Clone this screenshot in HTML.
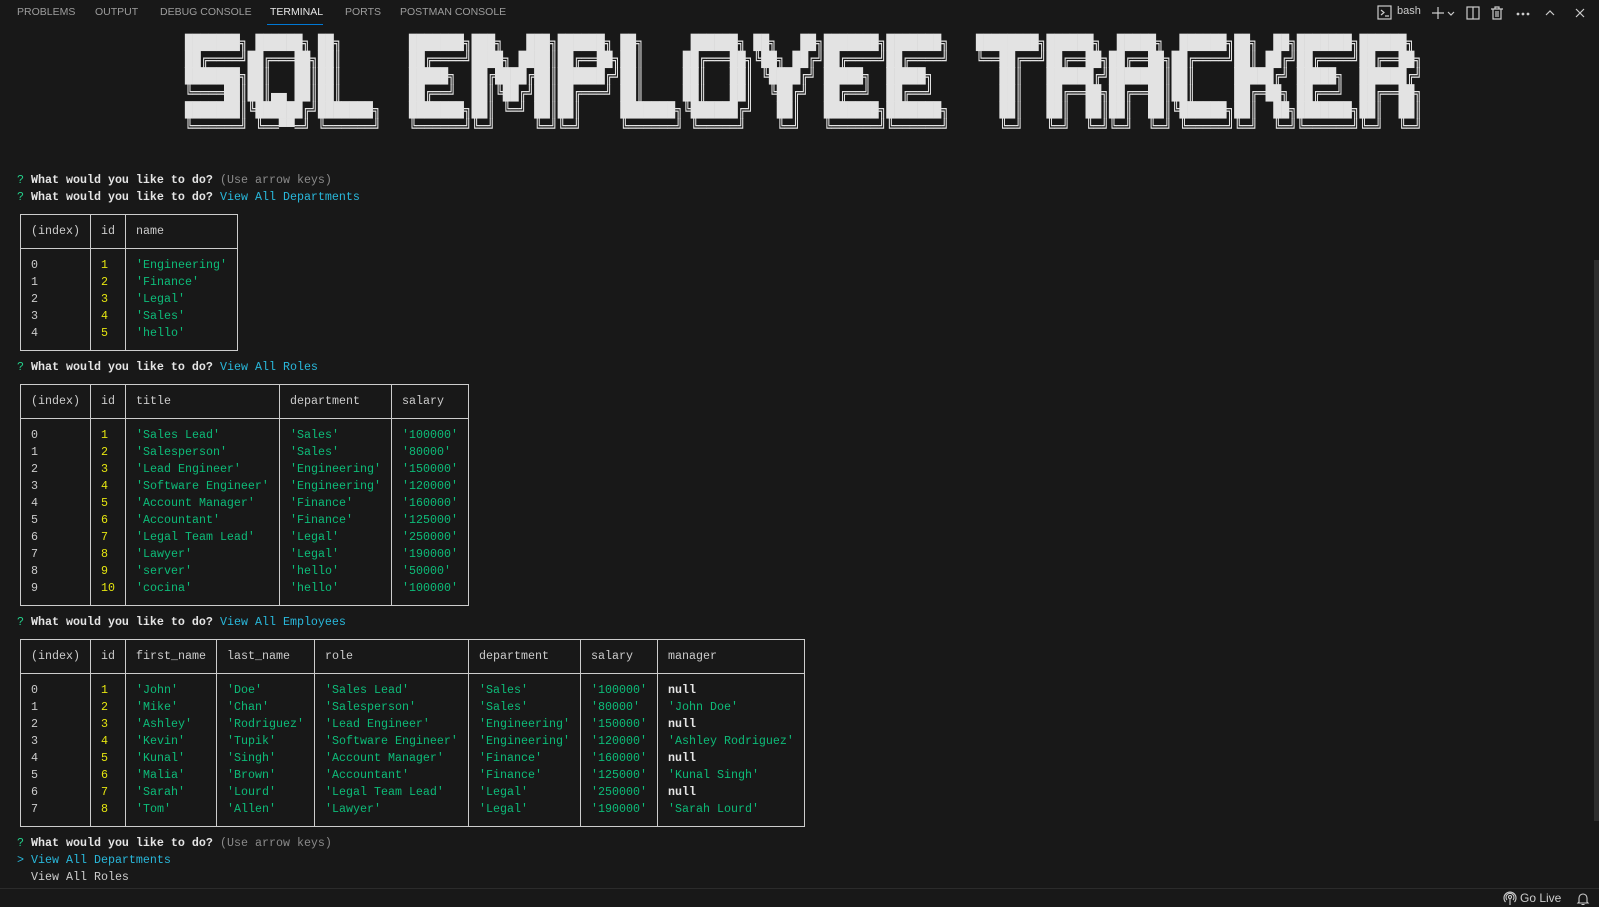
<!DOCTYPE html>
<html><head><meta charset="utf-8"><style>
html,body{margin:0;padding:0;background:#181818;width:1599px;height:907px;overflow:hidden;position:relative;font-family:"Liberation Mono","DejaVu Sans Mono",monospace;}
.tab{position:absolute;top:6px;font:10.5px "Liberation Sans",sans-serif;color:#9d9d9d;letter-spacing:0}
.title{position:absolute;top:35px;margin:0;font-family:"DejaVu Sans Mono",monospace;font-size:13px;line-height:15.1px;color:#e3e3e3;white-space:pre;transform-origin:0 0;transform:scaleY(1.126)}
.l{position:absolute;left:0;height:17px;line-height:17px;font-size:11.67px;white-space:pre;color:#cccccc}
.l span{position:absolute;top:0}
.q{color:#23d18b}.b{font-weight:bold;color:#e5e5e5}.g{color:#8a8a8a}.c{color:#29b8db}
.y{color:#e5e510}.s{color:#0dbc79}
.h{position:absolute;height:1px;background:#cccccc}
.v{position:absolute;width:1px;background:#cccccc}
</style></head><body>
<div class="tab" style="left:17px">PROBLEMS</div>
<div class="tab" style="left:95px">OUTPUT</div>
<div class="tab" style="left:160px">DEBUG CONSOLE</div>
<div class="tab" style="left:270px;color:#e7e7e7">TERMINAL</div>
<div style="position:absolute;left:267px;top:24px;width:56px;height:1px;background:#0078d4"></div>
<div class="tab" style="left:345px">PORTS</div>
<div class="tab" style="left:400px">POSTMAN CONSOLE</div>

<svg style="position:absolute;left:1376px;top:4px" width="225" height="18" viewBox="0 0 225 18" fill="none" stroke="#cccccc" stroke-width="1.2">
<rect x="2" y="2" width="13" height="13"/><path d="M5 6l3 2.5-3 2.5M9 12h4"/>
<path d="M62 3v12M56 9h12"/><path d="M72 8l3 3 3-3"/>
<rect x="91" y="3" width="12" height="12"/><path d="M97 3v12"/>
<path d="M115 5h12M119 5V3h4v2M117 5v10h8V5M120 7v6M122 7v6"/>
<circle cx="142" cy="10" r=".8" fill="#ccc"/><circle cx="147" cy="10" r=".8" fill="#ccc"/><circle cx="152" cy="10" r=".8" fill="#ccc"/>
<path d="M170 11l4-4 4 4"/><path d="M200 5l8 8M208 5l-8 8"/>
</svg>
<div style="position:absolute;left:1397px;top:5px;font:11px 'Liberation Sans',sans-serif;color:#cccccc">bash</div>

<pre class="title" style="left:185px">███████╗ ██████╗ ██╗     
██╔════╝██╔═══██╗██║     
███████╗██║   ██║██║     
╚════██║██║▄▄ ██║██║     
███████║╚██████╔╝███████╗
╚══════╝ ╚══▀▀═╝ ╚══════╝</pre>
<pre class="title" style="left:409px">███████╗███╗   ███╗██████╗ ██╗      ██████╗ ██╗   ██╗███████╗███████╗
██╔════╝████╗ ████║██╔══██╗██║     ██╔═══██╗╚██╗ ██╔╝██╔════╝██╔════╝
█████╗  ██╔████╔██║██████╔╝██║     ██║   ██║ ╚████╔╝ █████╗  █████╗  
██╔══╝  ██║╚██╔╝██║██╔═══╝ ██║     ██║   ██║  ╚██╔╝  ██╔══╝  ██╔══╝  
███████╗██║ ╚═╝ ██║██║     ███████╗╚██████╔╝   ██║   ███████╗███████╗
╚══════╝╚═╝     ╚═╝╚═╝     ╚══════╝ ╚═════╝    ╚═╝   ╚══════╝╚══════╝</pre>
<pre class="title" style="left:976px">████████╗██████╗  █████╗  ██████╗██╗  ██╗███████╗██████╗ 
╚══██╔══╝██╔══██╗██╔══██╗██╔════╝██║ ██╔╝██╔════╝██╔══██╗
   ██║   ██████╔╝███████║██║     █████╔╝ █████╗  ██████╔╝
   ██║   ██╔══██╗██╔══██║██║     ██╔═██╗ ██╔══╝  ██╔══██╗
   ██║   ██║  ██║██║  ██║╚██████╗██║  ██╗███████╗██║  ██║
   ╚═╝   ╚═╝  ╚═╝╚═╝  ╚═╝ ╚═════╝╚═╝  ╚═╝╚══════╝╚═╝  ╚═╝</pre>

<div class="l" style="top:171.5px"><span class="q" style="left:17px">?</span><span class="b" style="left:31px">What would you like to do?</span><span class="g" style="left:220px">(Use arrow keys)</span></div>
<div class="l" style="top:188.5px"><span class="q" style="left:17px">?</span><span class="b" style="left:31px">What would you like to do?</span><span class="c" style="left:220px">View All Departments</span></div>

<div class="l" style="top:222.5px"><span style="left:31px">(index)</span><span style="left:101px">id</span><span style="left:136px">name</span></div>
<div class="l" style="top:256.5px"><span style="left:31px">0</span><span class="y" style="left:101px">1</span><span class="s" style="left:136px">'Engineering'</span></div>
<div class="l" style="top:273.5px"><span style="left:31px">1</span><span class="y" style="left:101px">2</span><span class="s" style="left:136px">'Finance'</span></div>
<div class="l" style="top:290.5px"><span style="left:31px">2</span><span class="y" style="left:101px">3</span><span class="s" style="left:136px">'Legal'</span></div>
<div class="l" style="top:307.5px"><span style="left:31px">3</span><span class="y" style="left:101px">4</span><span class="s" style="left:136px">'Sales'</span></div>
<div class="l" style="top:324.5px"><span style="left:31px">4</span><span class="y" style="left:101px">5</span><span class="s" style="left:136px">'hello'</span></div>
<div class="h" style="left:20px;top:214px;width:218px"></div>
<div class="h" style="left:20px;top:248px;width:218px"></div>
<div class="h" style="left:20px;top:350px;width:218px"></div>
<div class="v" style="left:20px;top:214px;height:137px"></div>
<div class="v" style="left:90px;top:214px;height:137px"></div>
<div class="v" style="left:125px;top:214px;height:137px"></div>
<div class="v" style="left:237px;top:214px;height:137px"></div>

<div class="l" style="top:358.5px"><span class="q" style="left:17px">?</span><span class="b" style="left:31px">What would you like to do?</span><span class="c" style="left:220px">View All Roles</span></div>

<div class="l" style="top:392.5px"><span style="left:31px">(index)</span><span style="left:101px">id</span><span style="left:136px">title</span><span style="left:290px">department</span><span style="left:402px">salary</span></div>
<div class="l" style="top:426.5px"><span style="left:31px">0</span><span class="y" style="left:101px">1</span><span class="s" style="left:136px">'Sales Lead'</span><span class="s" style="left:290px">'Sales'</span><span class="s" style="left:402px">'100000'</span></div>
<div class="l" style="top:443.5px"><span style="left:31px">1</span><span class="y" style="left:101px">2</span><span class="s" style="left:136px">'Salesperson'</span><span class="s" style="left:290px">'Sales'</span><span class="s" style="left:402px">'80000'</span></div>
<div class="l" style="top:460.5px"><span style="left:31px">2</span><span class="y" style="left:101px">3</span><span class="s" style="left:136px">'Lead Engineer'</span><span class="s" style="left:290px">'Engineering'</span><span class="s" style="left:402px">'150000'</span></div>
<div class="l" style="top:477.5px"><span style="left:31px">3</span><span class="y" style="left:101px">4</span><span class="s" style="left:136px">'Software Engineer'</span><span class="s" style="left:290px">'Engineering'</span><span class="s" style="left:402px">'120000'</span></div>
<div class="l" style="top:494.5px"><span style="left:31px">4</span><span class="y" style="left:101px">5</span><span class="s" style="left:136px">'Account Manager'</span><span class="s" style="left:290px">'Finance'</span><span class="s" style="left:402px">'160000'</span></div>
<div class="l" style="top:511.5px"><span style="left:31px">5</span><span class="y" style="left:101px">6</span><span class="s" style="left:136px">'Accountant'</span><span class="s" style="left:290px">'Finance'</span><span class="s" style="left:402px">'125000'</span></div>
<div class="l" style="top:528.5px"><span style="left:31px">6</span><span class="y" style="left:101px">7</span><span class="s" style="left:136px">'Legal Team Lead'</span><span class="s" style="left:290px">'Legal'</span><span class="s" style="left:402px">'250000'</span></div>
<div class="l" style="top:545.5px"><span style="left:31px">7</span><span class="y" style="left:101px">8</span><span class="s" style="left:136px">'Lawyer'</span><span class="s" style="left:290px">'Legal'</span><span class="s" style="left:402px">'190000'</span></div>
<div class="l" style="top:562.5px"><span style="left:31px">8</span><span class="y" style="left:101px">9</span><span class="s" style="left:136px">'server'</span><span class="s" style="left:290px">'hello'</span><span class="s" style="left:402px">'50000'</span></div>
<div class="l" style="top:579.5px"><span style="left:31px">9</span><span class="y" style="left:101px">10</span><span class="s" style="left:136px">'cocina'</span><span class="s" style="left:290px">'hello'</span><span class="s" style="left:402px">'100000'</span></div>
<div class="h" style="left:20px;top:384px;width:449px"></div>
<div class="h" style="left:20px;top:418px;width:449px"></div>
<div class="h" style="left:20px;top:605px;width:449px"></div>
<div class="v" style="left:20px;top:384px;height:222px"></div>
<div class="v" style="left:90px;top:384px;height:222px"></div>
<div class="v" style="left:125px;top:384px;height:222px"></div>
<div class="v" style="left:279px;top:384px;height:222px"></div>
<div class="v" style="left:391px;top:384px;height:222px"></div>
<div class="v" style="left:468px;top:384px;height:222px"></div>

<div class="l" style="top:613.5px"><span class="q" style="left:17px">?</span><span class="b" style="left:31px">What would you like to do?</span><span class="c" style="left:220px">View All Employees</span></div>

<div class="l" style="top:647.5px"><span style="left:31px">(index)</span><span style="left:101px">id</span><span style="left:136px">first_name</span><span style="left:227px">last_name</span><span style="left:325px">role</span><span style="left:479px">department</span><span style="left:591px">salary</span><span style="left:668px">manager</span></div>
<div class="l" style="top:681.5px"><span style="left:31px">0</span><span class="y" style="left:101px">1</span><span class="s" style="left:136px">'John'</span><span class="s" style="left:227px">'Doe'</span><span class="s" style="left:325px">'Sales Lead'</span><span class="s" style="left:479px">'Sales'</span><span class="s" style="left:591px">'100000'</span><span class="b" style="left:668px">null</span></div>
<div class="l" style="top:698.5px"><span style="left:31px">1</span><span class="y" style="left:101px">2</span><span class="s" style="left:136px">'Mike'</span><span class="s" style="left:227px">'Chan'</span><span class="s" style="left:325px">'Salesperson'</span><span class="s" style="left:479px">'Sales'</span><span class="s" style="left:591px">'80000'</span><span class="s" style="left:668px">'John Doe'</span></div>
<div class="l" style="top:715.5px"><span style="left:31px">2</span><span class="y" style="left:101px">3</span><span class="s" style="left:136px">'Ashley'</span><span class="s" style="left:227px">'Rodriguez'</span><span class="s" style="left:325px">'Lead Engineer'</span><span class="s" style="left:479px">'Engineering'</span><span class="s" style="left:591px">'150000'</span><span class="b" style="left:668px">null</span></div>
<div class="l" style="top:732.5px"><span style="left:31px">3</span><span class="y" style="left:101px">4</span><span class="s" style="left:136px">'Kevin'</span><span class="s" style="left:227px">'Tupik'</span><span class="s" style="left:325px">'Software Engineer'</span><span class="s" style="left:479px">'Engineering'</span><span class="s" style="left:591px">'120000'</span><span class="s" style="left:668px">'Ashley Rodriguez'</span></div>
<div class="l" style="top:749.5px"><span style="left:31px">4</span><span class="y" style="left:101px">5</span><span class="s" style="left:136px">'Kunal'</span><span class="s" style="left:227px">'Singh'</span><span class="s" style="left:325px">'Account Manager'</span><span class="s" style="left:479px">'Finance'</span><span class="s" style="left:591px">'160000'</span><span class="b" style="left:668px">null</span></div>
<div class="l" style="top:766.5px"><span style="left:31px">5</span><span class="y" style="left:101px">6</span><span class="s" style="left:136px">'Malia'</span><span class="s" style="left:227px">'Brown'</span><span class="s" style="left:325px">'Accountant'</span><span class="s" style="left:479px">'Finance'</span><span class="s" style="left:591px">'125000'</span><span class="s" style="left:668px">'Kunal Singh'</span></div>
<div class="l" style="top:783.5px"><span style="left:31px">6</span><span class="y" style="left:101px">7</span><span class="s" style="left:136px">'Sarah'</span><span class="s" style="left:227px">'Lourd'</span><span class="s" style="left:325px">'Legal Team Lead'</span><span class="s" style="left:479px">'Legal'</span><span class="s" style="left:591px">'250000'</span><span class="b" style="left:668px">null</span></div>
<div class="l" style="top:800.5px"><span style="left:31px">7</span><span class="y" style="left:101px">8</span><span class="s" style="left:136px">'Tom'</span><span class="s" style="left:227px">'Allen'</span><span class="s" style="left:325px">'Lawyer'</span><span class="s" style="left:479px">'Legal'</span><span class="s" style="left:591px">'190000'</span><span class="s" style="left:668px">'Sarah Lourd'</span></div>
<div class="h" style="left:20px;top:639px;width:785px"></div>
<div class="h" style="left:20px;top:673px;width:785px"></div>
<div class="h" style="left:20px;top:826px;width:785px"></div>
<div class="v" style="left:20px;top:639px;height:188px"></div>
<div class="v" style="left:90px;top:639px;height:188px"></div>
<div class="v" style="left:125px;top:639px;height:188px"></div>
<div class="v" style="left:216px;top:639px;height:188px"></div>
<div class="v" style="left:314px;top:639px;height:188px"></div>
<div class="v" style="left:468px;top:639px;height:188px"></div>
<div class="v" style="left:580px;top:639px;height:188px"></div>
<div class="v" style="left:657px;top:639px;height:188px"></div>
<div class="v" style="left:804px;top:639px;height:188px"></div>

<div class="l" style="top:834.5px"><span class="q" style="left:17px">?</span><span class="b" style="left:31px">What would you like to do?</span><span class="g" style="left:220px">(Use arrow keys)</span></div>
<div class="l" style="top:851.5px"><span class="c" style="left:17px">&gt;</span><span class="c" style="left:31px">View All Departments</span></div>
<div class="l" style="top:868.5px"><span style="left:31px">View All Roles</span></div>

<div style="position:absolute;left:1594px;top:260px;width:5px;height:561px;background:#2e2e2e"></div>

<div style="position:absolute;left:0;top:888px;width:1599px;height:19px;background:#181818;border-top:1px solid #2b2b2b"></div>
<svg style="position:absolute;left:1503px;top:891px" width="14" height="15" viewBox="0 0 14 15" fill="none" stroke="#cccccc" stroke-width="1.1"><circle cx="7" cy="6" r="1.5"/><path d="M4 9a4 4 0 1 1 6 0M2.5 11a6 6 0 1 1 9 0M7 8v6"/></svg>
<div style="position:absolute;left:1520px;top:891px;font:12px 'Liberation Sans',sans-serif;color:#cccccc">Go Live</div>
<svg style="position:absolute;left:1576px;top:892px" width="14" height="14" viewBox="0 0 14 14" fill="none" stroke="#cccccc" stroke-width="1.1"><path d="M3 10V6a4 4 0 0 1 8 0v4l1 1H2zM5.5 12.5h3"/></svg>
</body></html>
